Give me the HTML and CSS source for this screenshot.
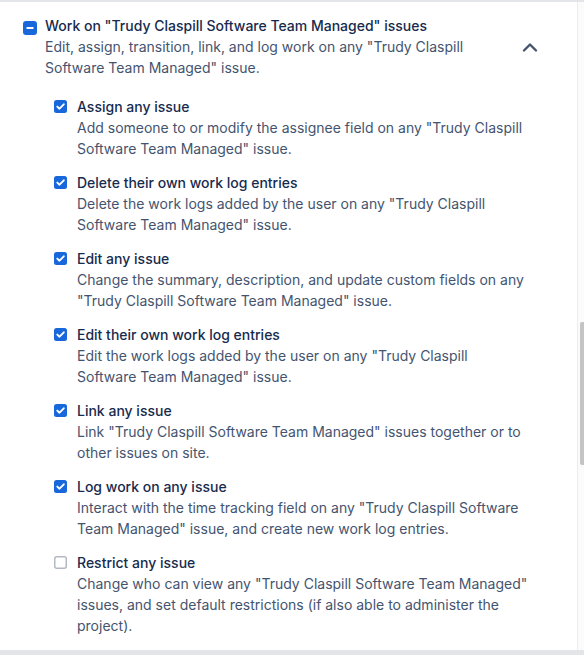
FILE: index.html
```html
<!DOCTYPE html>
<html lang="en">
<head>
<meta charset="utf-8">
<title>Permissions</title>
<link rel="stylesheet" href="styles.css">
</head>
<body>
<div class="frame">
  <div class="panel">
    <div class="group-head">
      <span class="cb cb-mixed">
        <svg width="14" height="14" viewBox="0 0 14 14"><rect x="0" y="0" width="14" height="14" rx="3" fill="#1868db"/><rect x="3.5" y="6" width="7" height="2" rx="0.5" fill="#fff"/></svg>
      </span>
      <div class="head-text">
        <div class="title">Work on "Trudy Claspill Software Team Managed" issues</div>
        <div class="desc">Edit, assign, transition, link, and log work on any "Trudy Claspill<br>Software Team Managed" issue.</div>
      </div>
      <button class="toggle" aria-label="Collapse">
        <svg width="16" height="12" viewBox="0 0 16 12"><path d="M2 9.5 L8 3.5 L14 9.5" fill="none" stroke="#44546f" stroke-width="2.4" stroke-linecap="round" stroke-linejoin="round"/></svg>
      </button>
    </div>
    <ul class="items">
      <li class="item">
        <span class="cb"><svg width="13" height="13" viewBox="0 0 13 13"><rect width="13" height="13" rx="2.5" fill="#1868db"/><path d="M3.3 6.6 L5.5 8.7 L9.8 4.3" fill="none" stroke="#fff" stroke-width="1.9" stroke-linecap="round" stroke-linejoin="round"/></svg></span>
        <div class="item-text">
          <div class="title">Assign any issue</div>
          <div class="desc">Add someone to or modify the assignee field on any "Trudy Claspill<br>Software Team Managed" issue.</div>
        </div>
      </li>
      <li class="item">
        <span class="cb"><svg width="13" height="13" viewBox="0 0 13 13"><rect width="13" height="13" rx="2.5" fill="#1868db"/><path d="M3.3 6.6 L5.5 8.7 L9.8 4.3" fill="none" stroke="#fff" stroke-width="1.9" stroke-linecap="round" stroke-linejoin="round"/></svg></span>
        <div class="item-text">
          <div class="title">Delete their own work log entries</div>
          <div class="desc">Delete the work logs added by the user on any "Trudy Claspill<br>Software Team Managed" issue.</div>
        </div>
      </li>
      <li class="item">
        <span class="cb"><svg width="13" height="13" viewBox="0 0 13 13"><rect width="13" height="13" rx="2.5" fill="#1868db"/><path d="M3.3 6.6 L5.5 8.7 L9.8 4.3" fill="none" stroke="#fff" stroke-width="1.9" stroke-linecap="round" stroke-linejoin="round"/></svg></span>
        <div class="item-text">
          <div class="title">Edit any issue</div>
          <div class="desc">Change the summary, description, and update custom fields on any<br>"Trudy Claspill Software Team Managed" issue.</div>
        </div>
      </li>
      <li class="item">
        <span class="cb"><svg width="13" height="13" viewBox="0 0 13 13"><rect width="13" height="13" rx="2.5" fill="#1868db"/><path d="M3.3 6.6 L5.5 8.7 L9.8 4.3" fill="none" stroke="#fff" stroke-width="1.9" stroke-linecap="round" stroke-linejoin="round"/></svg></span>
        <div class="item-text">
          <div class="title">Edit their own work log entries</div>
          <div class="desc">Edit the work logs added by the user on any "Trudy Claspill<br>Software Team Managed" issue.</div>
        </div>
      </li>
      <li class="item">
        <span class="cb"><svg width="13" height="13" viewBox="0 0 13 13"><rect width="13" height="13" rx="2.5" fill="#1868db"/><path d="M3.3 6.6 L5.5 8.7 L9.8 4.3" fill="none" stroke="#fff" stroke-width="1.9" stroke-linecap="round" stroke-linejoin="round"/></svg></span>
        <div class="item-text">
          <div class="title">Link any issue</div>
          <div class="desc">Link "Trudy Claspill Software Team Managed" issues together or to<br>other issues on site.</div>
        </div>
      </li>
      <li class="item">
        <span class="cb"><svg width="13" height="13" viewBox="0 0 13 13"><rect width="13" height="13" rx="2.5" fill="#1868db"/><path d="M3.3 6.6 L5.5 8.7 L9.8 4.3" fill="none" stroke="#fff" stroke-width="1.9" stroke-linecap="round" stroke-linejoin="round"/></svg></span>
        <div class="item-text">
          <div class="title">Log work on any issue</div>
          <div class="desc">Interact with the time tracking field on any "Trudy Claspill Software<br>Team Managed" issue, and create new work log entries.</div>
        </div>
      </li>
      <li class="item">
        <span class="cb"><svg width="13" height="13" viewBox="0 0 13 13"><rect x="0.75" y="0.75" width="11.5" height="11.5" rx="2" fill="#fff" stroke="#b3b9c4" stroke-width="1.5"/></svg></span>
        <div class="item-text">
          <div class="title">Restrict any issue</div>
          <div class="desc">Change who can view any "Trudy Claspill Software Team Managed"<br>issues, and set default restrictions (if also able to administer the<br>project).</div>
        </div>
      </li>
    </ul>
  </div>
  <div class="scrollbar"><div class="thumb"></div></div>
</div>
</body>
</html>
```

FILE: styles.css
```css
html, body {
  margin: 0;
  padding: 0;
}
body {
  background: #e4e5e9;
  font-family: Inter, "Noto Sans", sans-serif;
  font-size: 14px;
  color: #172b4d;
  height: 655px;
  overflow: hidden;
}
.frame {
  margin-top: 2px;
  height: 648px;
  background: #fff;
  display: flex;
}
.panel {
  width: 578px;
  border-right: 1px solid #ebecf0;
  box-sizing: border-box;
  padding: 13px 0 0 23px;
}
.scrollbar {
  flex: 1;
  background: #fbfbfb;
  padding: 320px 0 0 2px;
}
.thumb {
  width: 4px;
  height: 143px;
  background: #c4c4c4;
  border-radius: 2px 0 0 2px;
}
.group-head {
  display: flex;
  align-items: flex-start;
}
.cb {
  display: block;
  flex: none;
  line-height: 0;
}
.cb-mixed {
  margin-top: 6px;
  margin-right: 8px;
}
.head-text {
  width: 452px;
}
.title {
  font-weight: 500;
  line-height: 21px;
  color: #172b4d;
}
.desc {
  line-height: 21px;
  color: #44546f;
}
.toggle {
  align-self: center;
  margin-left: 17px;
  width: 32px;
  height: 32px;
  border: 0;
  background: transparent;
  padding: 0;
  display: flex;
  align-items: center;
  justify-content: center;
}
.items {
  list-style: none;
  margin: 18px 0 0 31px;
  padding: 0;
  display: flex;
  flex-direction: column;
  gap: 13px;
}
.item {
  display: flex;
  align-items: flex-start;
}
.item .cb {
  margin-top: 4px;
  margin-right: 10px;
}
.item-text {
  width: 470px;
}
```
